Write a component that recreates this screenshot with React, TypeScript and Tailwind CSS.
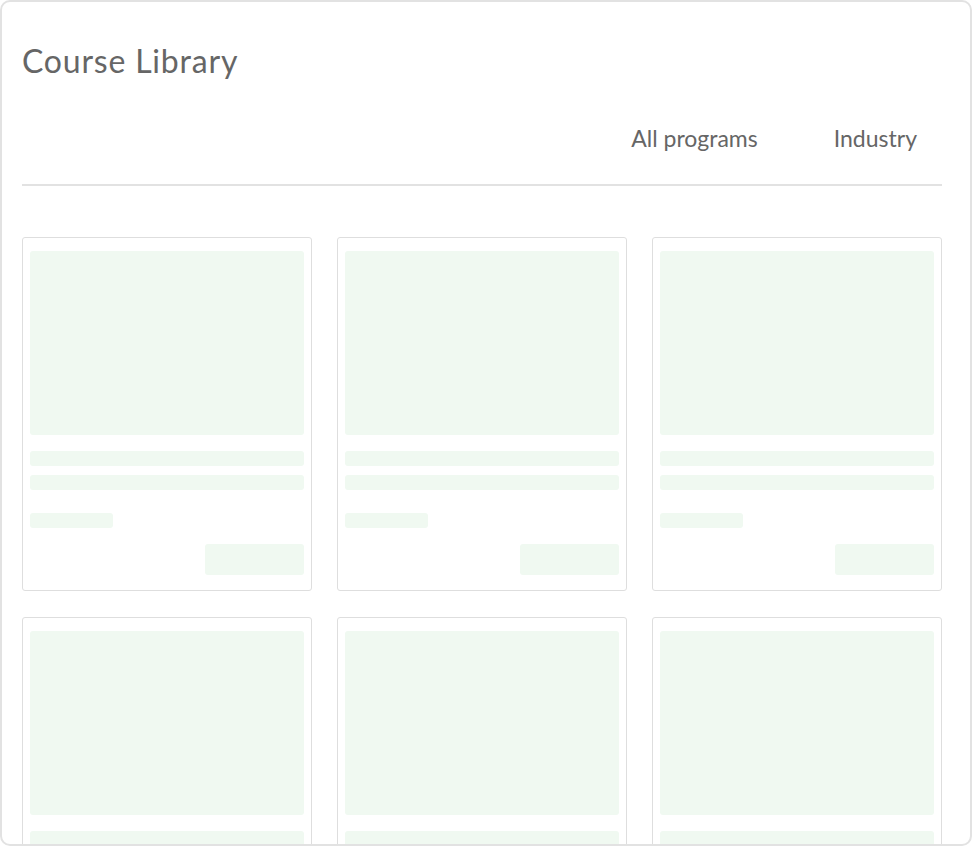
import React from "react";

function Card() {
  return (
    <div className="flex h-[354px] flex-col rounded-[3px] border border-[#dedede] bg-white px-[7px] pt-[13px]">
      <div className="h-[184px] w-full rounded-[3px] bg-[#f0f9f1]" />
      <div className="mt-[16px] h-[15px] w-full rounded-[3px] bg-[#f0f9f1]" />
      <div className="mt-[9px] h-[15px] w-full rounded-[3px] bg-[#f0f9f1]" />
      <div className="mt-[23px] h-[15px] w-[83px] rounded-[3px] bg-[#f0f9f1]" />
      <div className="mt-[16px] h-[31px] w-[99px] self-end rounded-[3px] bg-[#f0f9f1]" />
    </div>
  );
}

export default function App() {
  return (
    <div
      className="h-[846px] w-[972px] overflow-hidden rounded-[10px] border-2 border-[#e2e2e2] bg-white pl-[20px] pr-[28px] text-[#666666]"
      style={{ fontFamily: "Lato, 'Noto Sans', sans-serif" }}
    >
      <h1 className="mt-[39px] h-[40px] text-[32px] leading-[40px] font-normal tracking-[0.8px]">Course Library</h1>
      <div className="mt-[42px] flex justify-end border-b-2 border-[#e2e2e2] pb-[31px] pr-[25px]">
        <span className="text-[23px] leading-[30px]">All programs</span>
        <span className="ml-[76px] text-[23px] leading-[30px]">Industry</span>
      </div>
      <div className="mt-[51px] grid grid-cols-3 gap-x-[25px] gap-y-[26px]">
        <Card />
        <Card />
        <Card />
        <Card />
        <Card />
        <Card />
      </div>
    </div>
  );
}
